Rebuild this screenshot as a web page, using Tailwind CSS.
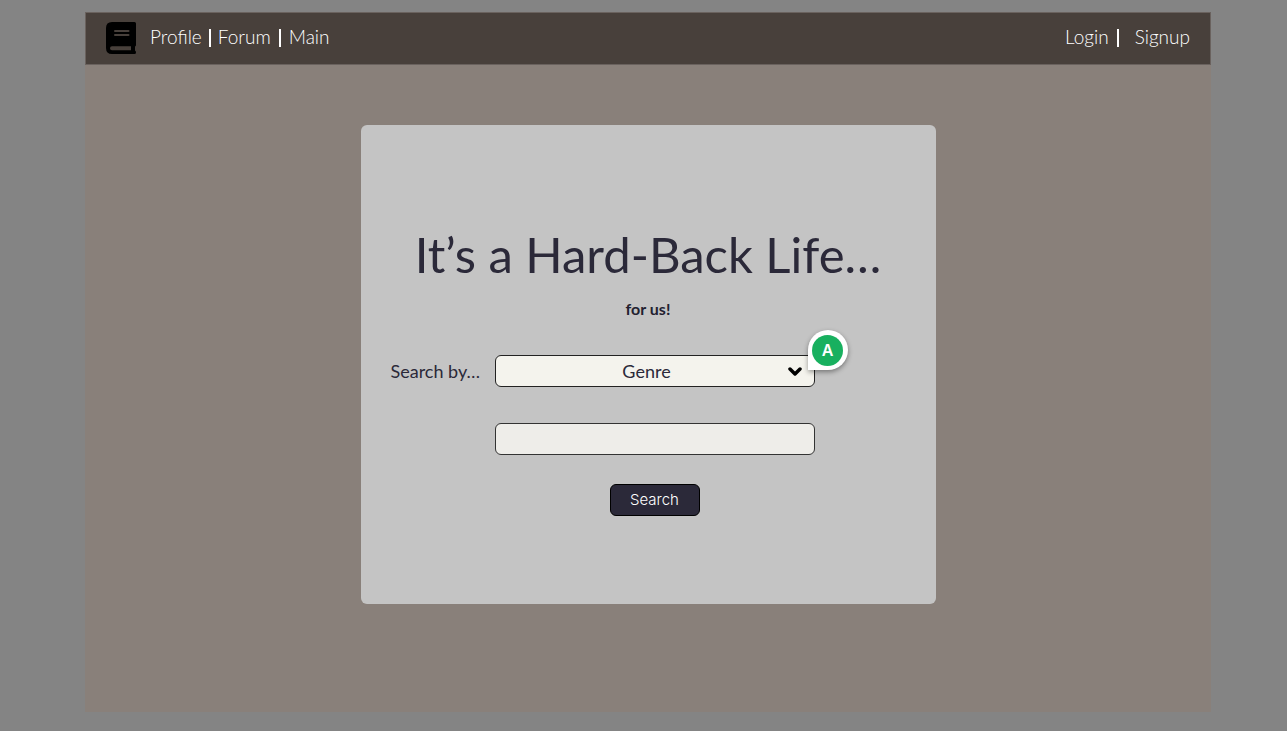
<!DOCTYPE html>
<html lang="en">
<head>
<meta charset="utf-8">
<meta name="viewport" content="width=device-width, initial-scale=1">
<title>It’s a Hard-Back Life</title>
<script src="https://cdn.jsdelivr.net/npm/@tailwindcss/browser@4"></script>
</head>
<body class="flex min-h-screen flex-col bg-[#848484] pt-3 pr-[76px] pb-[19px] pl-[85px] font-['Lato',sans-serif] text-[#2b2939]">
  <div class="flex grow flex-col bg-[#89807a]">
    <header class="flex h-[53px] items-center justify-between border border-[#6a625e] bg-[#48403b] px-5 pb-0.5 text-[19px] font-light text-white">
      <nav class="flex items-center" aria-label="Main">
        <a href="#" aria-label="Home" class="mr-[14px]">
          <svg class="h-8 w-[30px]" viewBox="0 0 30 32" aria-hidden="true">
            <path fill="#000" fill-rule="evenodd" d="M6 0H28.500Q30 0 30 1.500V23Q30 24 29 24.500V28.500Q30 28.800 30 30.500Q30 32 28.500 32H6Q0 32 0 26V6Q0 0 6 0ZM9 8Q8 8 8 9Q8 10 9 10H22.500Q23.500 10 23.500 9Q23.500 8 22.500 8ZM9 12Q8 12 8 13Q8 14 9 14H22.500Q23.500 14 23.500 13Q23.500 12 22.500 12ZM6 24.300Q4 24.300 4 26.200Q4 28.200 6 28.200H25V24.300Z"/>
          </svg>
        </a>
        <a href="#">Profile</a>
        <span class="mx-[7px] h-[18px] w-0.5 bg-white"></span>
        <a href="#">Forum</a>
        <span class="mx-2 h-[18px] w-0.5 bg-white"></span>
        <a href="#">Main</a>
      </nav>
      <nav class="flex items-center" aria-label="Account">
        <a href="#">Login</a>
        <span class="mr-4 ml-2 h-[18px] w-0.5 bg-white"></span>
        <a href="#">Signup</a>
      </nav>
    </header>
    <main class="flex grow justify-center pt-[60px] pb-[108px]">
      <section class="w-[575px] rounded-md bg-[#c4c4c4] px-[30px] pt-[97px]">
        <h1 class="text-center text-[49px] leading-[64px] whitespace-nowrap">It’s a Hard-Back Life…</h1>
        <p class="mt-[11px] text-center text-base leading-6 font-bold text-[#222130]">for us!</p>
        <form class="mt-[34px] grid grid-cols-[90px_320px] items-center gap-x-[14px]">
          <label for="field" class="text-lg whitespace-nowrap">Search by…</label>
          <div class="relative">
            <select id="field" class="h-8 w-full appearance-none rounded-md border border-[#222] bg-[#f4f3ed] pr-4 text-center text-lg leading-6 [text-align-last:center]">
              <option>Genre</option>
              <option>Title</option>
              <option>Author</option>
            </select>
            <svg class="pointer-events-none absolute top-3 right-[13px] h-[9px] w-[14px]" viewBox="0 0 14 9" fill="none" stroke="#000" stroke-width="3.500" stroke-linecap="round" stroke-linejoin="round" aria-hidden="true"><path d="M2 2l5 5 5-5"/></svg>
            <div class="absolute -top-[25px] -right-[33px] flex size-10 items-center justify-center rounded-full rounded-bl-none bg-white shadow-[0_2px_5px_rgba(0,0,0,0.4)]">
              <span class="flex size-[31px] items-center justify-center rounded-full bg-[#18b05f] font-['Inter',sans-serif] text-base font-semibold text-white">A</span>
            </div>
          </div>
          <input type="text" aria-label="Search term" class="col-start-2 mt-9 h-8 w-full rounded-md border border-[#333] bg-[#eeede9] px-3 text-lg">
          <button type="submit" class="col-start-2 mt-[29px] h-8 w-[90px] justify-self-center rounded-md border border-black bg-[#2b2939] font-['Inter',sans-serif] text-[15px] font-light text-white">Search</button>
        </form>
      </section>
    </main>
  </div>
</body>
</html>
